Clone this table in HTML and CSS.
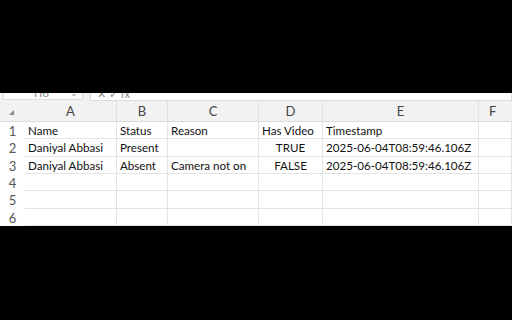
FILE: index.html
```html
<!DOCTYPE html>
<html lang="en">
	<head>
		<meta charset="UTF-8" />
		<meta name="viewport" content="width=device-width, initial-scale=1.0" />
		<title>Attendance</title>
		<link rel="stylesheet" href="styles.css">
	</head>
	<body>
		<div class="frame-top"></div>
		<div class="sheet">
			<div class="formula-bar">
				<div class="name-box"><span>H6</span><span class="drop">⌄</span></div>
				<div class="formula-box"><span>✕ ✓ fx</span></div>
			</div>
			<div class="grid">
				<div class="corner"><span class="tri"></span></div>
				<div class="col-head">A</div>
				<div class="col-head">B</div>
				<div class="col-head">C</div>
				<div class="col-head">D</div>
				<div class="col-head">E</div>
				<div class="col-head last">F</div>

				<div class="row-head">1</div>
				<div class="cell">Name</div>
				<div class="cell">Status</div>
				<div class="cell">Reason</div>
				<div class="cell">Has Video</div>
				<div class="cell">Timestamp</div>
				<div class="cell"></div>

				<div class="row-head">2</div>
				<div class="cell">Daniyal Abbasi</div>
				<div class="cell">Present</div>
				<div class="cell"></div>
				<div class="cell center">TRUE</div>
				<div class="cell">2025-06-04T08:59:46.106Z</div>
				<div class="cell"></div>

				<div class="row-head">3</div>
				<div class="cell">Daniyal Abbasi</div>
				<div class="cell">Absent</div>
				<div class="cell">Camera not on</div>
				<div class="cell center">FALSE</div>
				<div class="cell">2025-06-04T08:59:46.106Z</div>
				<div class="cell"></div>

				<div class="row-head">4</div>
				<div class="cell"></div>
				<div class="cell"></div>
				<div class="cell"></div>
				<div class="cell"></div>
				<div class="cell"></div>
				<div class="cell"></div>

				<div class="row-head">5</div>
				<div class="cell"></div>
				<div class="cell"></div>
				<div class="cell"></div>
				<div class="cell"></div>
				<div class="cell"></div>
				<div class="cell"></div>

				<div class="row-head">6</div>
				<div class="cell"></div>
				<div class="cell"></div>
				<div class="cell"></div>
				<div class="cell"></div>
				<div class="cell"></div>
				<div class="cell"></div>
			</div>
		</div>
		<div class="frame-bottom"></div>
	</body>
</html>
```

FILE: styles.css
```css
body {
	margin: 0;
	background: #000;
	font-family: Lato, 'Liberation Sans', sans-serif;
	color: #111;
}

.frame-top {
	height: 93px;
}
.frame-bottom {
	height: 94px;
}

.sheet {
	background: #fff;
	height: 133px;
	overflow: hidden;
}

.formula-bar {
	display: flex;
	gap: 7px;
	height: 8px;
	padding: 0 0 0 3px;
	background: #f3f3f3;
}
.name-box,
.formula-box {
	background: #fff;
	border: 1px solid #dcdcdc;
	border-top: none;
	height: 7px;
	overflow: hidden;
	display: flex;
	align-items: flex-end;
	font-size: 11px;
	color: #888;
}
.name-box {
	width: 80px;
	justify-content: space-between;
	padding: 0 4px 0 30px;
	box-sizing: border-box;
}
.name-box span,
.formula-box span {
	line-height: 11px;
	margin-bottom: 1px;
}
.drop {
	font-size: 9px;
}
.formula-box {
	flex-grow: 1;
	padding-left: 6px;
}

.grid {
	display: grid;
	grid-template-columns: 25px 92px 51px 91px 64px 156px 1fr;
	grid-template-rows: 21px 17px 18px 17px 17px 18px 17px;
}

.corner,
.col-head {
	background: #f2f2f2;
	border-bottom: 1px solid #dadada;
	box-sizing: border-box;
}
.corner {
	position: relative;
}
.tri {
	position: absolute;
	left: 9px;
	top: 9px;
	width: 0;
	height: 0;
	border-left: 5px solid transparent;
	border-bottom: 5px solid #8a8a8a;
}
.col-head {
	border-right: 1px solid #e2e2e2;
	text-align: center;
	font-size: 13px;
	line-height: 20px;
	color: #444;
}
.col-head.last {
	border-right: none;
	text-align: left;
	padding-left: 10px;
}

.row-head {
	font-size: 13px;
	line-height: 18px;
	text-align: center;
	color: #555;
}

.cell {
	border-right: 1px solid #e4e4e4;
	border-bottom: 1px solid #e4e4e4;
	padding: 2px 3px 0;
	font-size: 11.6px;
	line-height: 14px;
	white-space: nowrap;
	overflow: hidden;
}
.center {
	text-align: center;
}
```
